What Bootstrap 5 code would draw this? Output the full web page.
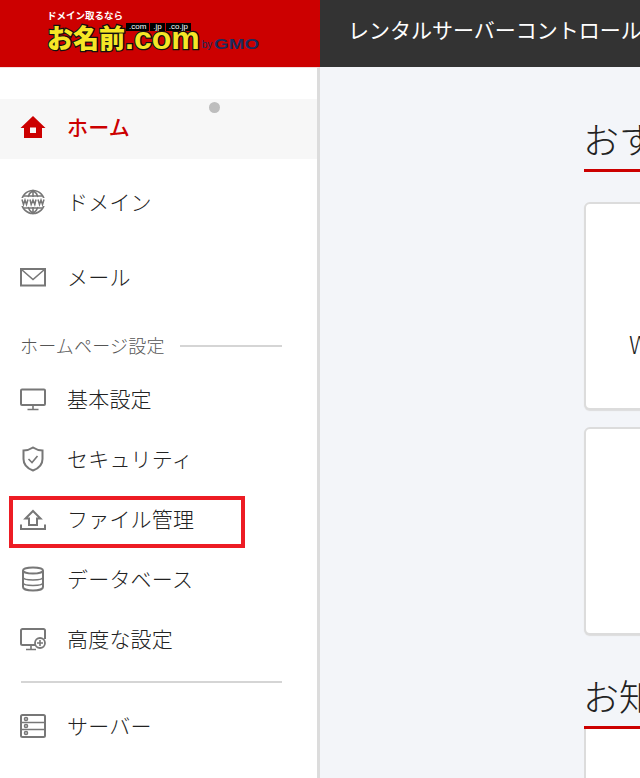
<!DOCTYPE html>
<html lang="ja">

<head>
    <meta charset="UTF-8">
    <meta name="viewport" content="width=device-width, initial-scale=1.0">
    <title>レンタルサーバーコントロールパネル</title>
    <link rel="stylesheet" href="https://cdn.jsdelivr.net/npm/bootstrap@5.3.3/dist/css/bootstrap.min.css">
    <script src="https://cdn.jsdelivr.net/npm/bootstrap@5.3.3/dist/js/bootstrap.bundle.min.js"></script>
    <style>
        html, body {
            height: 778px;
            overflow: hidden;
        }

        body {
            font-family: "Noto Sans CJK JP", "Liberation Sans", sans-serif;
            font-weight: 300;
            color: #222;
            background-color: #f3f5f9;
        }

        .brand-box {
            width: 320px;
            height: 67px;
            background-color: #cc0000;
            padding: 9px 0 0 47px;
            flex-shrink: 0;
        }

        .brand-catch {
            font-size: 9.5px;
            font-weight: 700;
            line-height: 12px;
            color: #fff;
        }

        .brand-main {
            height: 29px;
            white-space: nowrap;
        }

        .brand-name {
            font-size: 26px;
            line-height: 26px;
            font-weight: 900;
            color: #f6e626;
            -webkit-text-stroke: 2.5px #111;
            paint-order: stroke fill;
        }

        .brand-com {
            font-family: "Liberation Sans", sans-serif;
            font-size: 32px;
            line-height: 13px;
            font-weight: 700;
            color: #f6e626;
            -webkit-text-stroke: 2.5px #111;
            paint-order: stroke fill;
            margin-bottom: 5px;
        }

        .brand-by {
            font-family: "Liberation Sans", sans-serif;
            font-size: 10px;
            line-height: 10px;
            font-weight: 400;
            color: #1b2a5c;
            margin: 0 2px 0 2px;
        }

        .brand-gmo {
            font-family: "Liberation Sans", sans-serif;
            font-size: 14px;
            line-height: 11px;
            font-weight: 700;
            color: #1b2a5c;
            transform: scaleX(1.35);
            transform-origin: left center;
        }

        .brand-tags {
            gap: 1px;
            margin: 1px 0 1px 1px;
        }

        .brand-tags span {
            font-family: "Liberation Sans", sans-serif;
            font-size: 8px;
            font-weight: 400;
            line-height: 8px;
            height: 8px;
            background-color: #000;
            color: #fff;
            padding: 0 3px;
        }

        .top-title {
            flex: 1;
            height: 67px;
            background-color: #333;
            color: #fff;
            font-size: 21px;
            font-weight: 400;
            line-height: 59px;
            padding-left: 30px;
            text-indent: -2px;
            white-space: nowrap;
            overflow: hidden;
        }

        .side-col {
            width: 320px;
            flex-shrink: 0;
            background-color: #fff;
            border-top: 1px solid #f6dede;
            border-right: 3px solid #dcdcdc;
            padding-top: 31px;
            height: 711px;
        }

        .side-item {
            position: relative;
            height: 60px;
            padding: 0 0 2px 20px;
            font-size: 21px;
            letter-spacing: .2px;
            color: #222;
        }

        .side-item svg {
            width: 26px;
            height: 26px;
            flex-shrink: 0;
            margin-right: 21px;
            fill: none;
            stroke: #777;
            stroke-width: 1.6;
        }

        .side-item.is-home {
            background-color: #f7f7f7;
            color: #cc0000;
            font-weight: 500;
            margin-bottom: 6px;
            padding-bottom: 4px;
        }

        .side-item.is-tall {
            height: 75px;
        }

        .home-dot {
            position: absolute;
            left: 209px;
            top: 3px;
            width: 11px;
            height: 11px;
            border-radius: 50%;
            background-color: #bdbdbd;
        }

        .mark-box {
            position: absolute;
            left: 9px;
            top: 6px;
            width: 236px;
            height: 52px;
            border: 4px solid #ed1c24;
        }

        .side-label {
            height: 55px;
            padding: 6px 35px 0 20px;
            font-size: 18px;
            letter-spacing: .2px;
            color: #555;
        }

        .side-label::after {
            content: "";
            flex: 1;
            height: 2px;
            margin-left: 15px;
            background-color: #d5d5d5;
        }

        .side-rule {
            height: 2px;
            margin: 11px 35px 14px 21px;
            background-color: #d5d5d5;
        }

        .main-col {
            flex: 1;
            overflow: hidden;
            padding: 42px 0 0 264px;
        }

        .main-inner {
            width: 800px;
        }

        .sec-title {
            font-size: 36px;
            font-weight: 300;
            line-height: 58px;
            height: 63px;
            margin: 0;
            text-indent: -1px;
            color: #222;
            border-bottom: 3px solid #cc0000;
        }

        .panel-box {
            height: 208px;
            background-color: #fff;
            border: 2px solid #dcdcdc;
            border-radius: 6px;
            box-shadow: 0 1px 1px #ddd;
            font-size: 24px;
            padding-top: 122px;
            padding-left: 43px;
            margin-bottom: 17px;
        }

        .panel-gap {
            margin-top: 30px;
        }

        .panel-open {
            height: 60px;
            background-color: #fff;
            border-left: 2px solid #dcdcdc;
        }

        .sec-next {
            margin-top: 31px;
        }
    </style>
</head>

<body>
    <header class="d-flex">
        <div class="brand-box">
            <div class="brand-catch">ドメイン取るなら</div>
            <div class="brand-main d-flex align-items-end">
                <span class="brand-name">お名前</span>
                <div class="d-flex flex-column">
                    <div class="brand-tags d-flex">
                        <span>.com</span><span>.jp</span><span>.co.jp</span>
                    </div>
                    <span class="brand-com">.com</span>
                </div>
                <span class="brand-by">by</span>
                <span class="brand-gmo">GMO</span>
            </div>
        </div>
        <div class="top-title">レンタルサーバーコントロールパネル</div>
    </header>

    <div class="d-flex">
        <nav class="side-col">
            <div class="side-item is-home d-flex align-items-center">
                <svg viewBox="0 0 26 26" style="stroke:none;fill:#cc0000"><path fill-rule="evenodd" d="M13 2 25.500 14H22V24H4V14H.5ZM10 13.500V19H16V13.500Z"/></svg>
                ホーム
                <span class="home-dot"></span>
            </div>
            <div class="side-item is-tall d-flex align-items-center">
                <svg viewBox="0 0 26 26"><circle cx="13" cy="13" r="11.500"/><path d="M13 1.500V8M13 18V24.500M3.500 7H22.500M3.500 19H22.500M8 8C9 5 10.500 3 13 1.500 15.500 3 17 5 18 8M8 18C9 21 10.500 23 13 24.500 15.500 23 17 21 18 18"/><rect x="0" y="9" width="26" height="8" fill="#fff" stroke="none"/><path stroke-width="1.500" d="M2 10.500 3.500 15.500 5 11 6.500 15.500 8 10.500M10 10.500 11.200 15.500 13 11 14.800 15.500 16 10.500M18 10.500 19.500 15.500 21 11 22.500 15.500 24 10.500"/></svg>
                ドメイン
            </div>
            <div class="side-item is-tall d-flex align-items-center">
                <svg viewBox="0 0 26 26"><rect x="1" y="5" width="24" height="16.500" stroke-width="2"/><path d="M1.500 5.500 13 15.500 24.500 5.500"/></svg>
                メール
            </div>
            <div class="side-label d-flex align-items-center">ホームページ設定</div>
            <div class="side-item d-flex align-items-center">
                <svg viewBox="0 0 26 26"><rect x="1" y="3.500" width="24" height="15.500" rx="1" stroke-width="2"/><path d="M13 19V23M7.500 23.500H18.500"/></svg>
                基本設定
            </div>
            <div class="side-item d-flex align-items-center">
                <svg viewBox="0 0 26 26"><path stroke-width="2" d="M13 1.500C16 3.500 19 4.500 22.500 4.500V13C22.500 18.500 18.500 22.500 13 24.500 7.500 22.500 3.500 18.500 3.500 13V4.500C7 4.500 10 3.500 13 1.500Z"/><path d="M8.500 13 12 16.500 17.500 10"/></svg>
                セキュリティ
            </div>
            <div class="side-item d-flex align-items-center">
                <svg viewBox="0 0 26 26"><path stroke-width="2" d="M13 5 20.500 12.500H17V19H9V12.500H5.500Z"/><path stroke-width="2" d="M1 18.500V23H25V18.500"/></svg>
                ファイル管理
                <span class="mark-box"></span>
            </div>
            <div class="side-item d-flex align-items-center">
                <svg viewBox="0 0 26 26"><ellipse cx="13" cy="4.500" rx="10" ry="3" stroke-width="2"/><path stroke-width="2" d="M3 4.500V21C3 23 7 24.500 13 24.500S23 23 23 21V4.500"/><path d="M3 11C3 13 7 14 13 14S23 13 23 11M3 16.500C3 18.500 7 19.500 13 19.500S23 18.500 23 16.500"/></svg>
                データベース
            </div>
            <div class="side-item d-flex align-items-center">
                <svg viewBox="0 0 26 26"><path stroke-width="2" d="M16 19H2.500A1.500 1.500 0 0 1 1 17.500V4.500A1.500 1.500 0 0 1 2.500 3H23.500A1.500 1.500 0 0 1 25 4.500V13"/><path d="M11 19V23M6 23.500H16"/><circle cx="20" cy="17" r="5" stroke-width="1.800"/><path d="M20 14V20M17 17H23"/></svg>
                高度な設定
            </div>
            <div class="side-rule"></div>
            <div class="side-item d-flex align-items-center">
                <svg viewBox="0 0 26 26"><rect x="1" y="2" width="24" height="22" rx="1.500" stroke-width="2"/><path d="M1 9.500H25M1 16.500H25"/><circle cx="6" cy="6" r="1.500"/><circle cx="6" cy="13" r="1.500"/><circle cx="6" cy="20" r="1.500"/></svg>
                サーバー
            </div>
        </nav>

        <main class="main-col">
            <div class="main-inner">
                <h2 class="sec-title">おすすめサービス</h2>
                <div class="panel-box panel-gap">WordPress</div>
                <div class="panel-box"></div>
                <h2 class="sec-title sec-next">お知らせ</h2>
                <div class="panel-open"></div>
            </div>
        </main>
    </div>
</body>

</html>
